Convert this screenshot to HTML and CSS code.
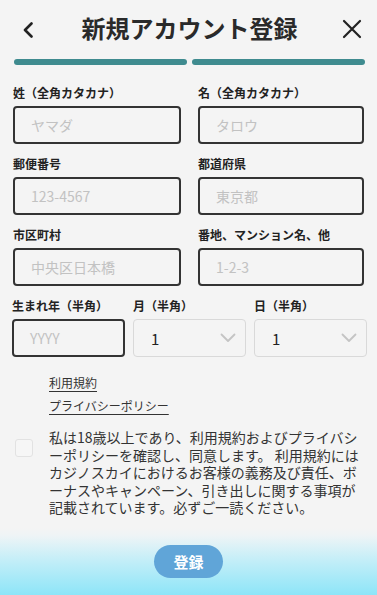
FILE: index.html
```html
<!DOCTYPE html>
<html lang="ja">
<head>
<meta charset="utf-8">
<link rel="stylesheet" href="styles.css">
</head>
<body>
<div class="page">
  <header class="header">
    <svg class="icon-back" width="12" height="16" viewBox="0 0 12 16"><path d="M9.5 1.5 L3 8 L9.5 14.5" fill="none" stroke="#222" stroke-width="2.6" stroke-linecap="round" stroke-linejoin="round"/></svg>
    <h1 class="title">新規アカウント登録</h1>
    <svg class="icon-close" width="20" height="20" viewBox="0 0 20 20"><path d="M2 2 L18 18 M18 2 L2 18" fill="none" stroke="#222" stroke-width="2.2" stroke-linecap="round"/></svg>
  </header>
  <div class="progress">
    <span class="bar"></span>
    <span class="bar"></span>
  </div>
  <form class="form">
    <div class="grid2">
      <div class="field">
        <label class="label">姓（全角カタカナ）</label>
        <div class="input"><span class="ph">ヤマダ</span></div>
      </div>
      <div class="field">
        <label class="label">名（全角カタカナ）</label>
        <div class="input"><span class="ph">タロウ</span></div>
      </div>
      <div class="field">
        <label class="label">郵便番号</label>
        <div class="input"><span class="ph">123-4567</span></div>
      </div>
      <div class="field">
        <label class="label">都道府県</label>
        <div class="input"><span class="ph">東京都</span></div>
      </div>
      <div class="field">
        <label class="label">市区町村</label>
        <div class="input"><span class="ph">中央区日本橋</span></div>
      </div>
      <div class="field">
        <label class="label">番地、マンション名、他</label>
        <div class="input"><span class="ph">1-2-3</span></div>
      </div>
    </div>
    <div class="grid3">
      <div class="field">
        <label class="label">生まれ年（半角）</label>
        <div class="input"><span class="ph">YYYY</span></div>
      </div>
      <div class="field">
        <label class="label">月（半角）</label>
        <div class="select"><span class="val">1</span>
          <svg width="16" height="10" viewBox="0 0 16 10"><path d="M1.5 1.5 L8 8 L14.5 1.5" fill="none" stroke="#c4c4c4" stroke-width="1.8" stroke-linecap="round" stroke-linejoin="round"/></svg>
        </div>
      </div>
      <div class="field">
        <label class="label">日（半角）</label>
        <div class="select"><span class="val">1</span>
          <svg width="16" height="10" viewBox="0 0 16 10"><path d="M1.5 1.5 L8 8 L14.5 1.5" fill="none" stroke="#c4c4c4" stroke-width="1.8" stroke-linecap="round" stroke-linejoin="round"/></svg>
        </div>
      </div>
    </div>
    <div class="links">
      <a class="link" href="#">利用規約</a>
      <a class="link" href="#">プライバシーポリシー</a>
    </div>
    <div class="agree">
      <span class="checkbox"></span>
      <p class="agree-text">私は18歳以上であり、利用規約およびプライバシーポリシーを確認し、同意します。 利用規約にはカジノスカイにおけるお客様の義務及び責任、ボーナスやキャンペーン、引き出しに関する事項が記載されています。必ずご一読ください。</p>
    </div>
  </form>
  <footer class="footer">
    <button class="submit" type="button">登録</button>
  </footer>
</div>
</body>
</html>
```
FILE: styles.css
```css
* { box-sizing: border-box; }
html, body { margin: 0; padding: 0; }
body {
  background: #f4f4f4;
  font-family: "Noto Sans CJK JP", "Noto Sans", sans-serif;
  color: #222;
  width: 377px;
  height: 595px;
  overflow: hidden;
}
.page { display: flex; flex-direction: column; height: 595px; }
.header {
  height: 59px;
  display: flex;
  align-items: center;
  justify-content: space-between;
  padding: 0 15px 3px 22px;
}
.icon-back { display: block; margin-top: 3px; }
.icon-close { display: block; margin-top: 1px; }
.title {
  margin: 0 0 0 3px;
  font-size: 24px;
  font-weight: 700;
  color: #2a2a2a;
  line-height: 30px;
  letter-spacing: 0;
}
.progress {
  display: flex;
  gap: 5px;
  padding: 0 12px 0 14px;
}
.bar {
  flex: 1;
  height: 6px;
  border-radius: 3px;
  background: #3f8b8f;
}
.form { padding: 20px 0 0; margin: 0; }
.grid2 {
  display: grid;
  grid-template-columns: 168px 166px;
  column-gap: 17px;
  row-gap: 12px;
  padding: 0 13px;
}
.grid3 {
  display: grid;
  grid-template-columns: 113px 113px 113px;
  column-gap: 8px;
  padding: 0 12px;
  margin-top: 12px;
}
.field { display: flex; flex-direction: column; gap: 5px; }
.label {
  font-size: 12px;
  font-weight: 700;
  line-height: 16px;
  color: #222;
  white-space: nowrap;
}
.input {
  height: 38px;
  border: 2px solid #333;
  border-radius: 4px;
  display: flex;
  align-items: center;
  padding: 0 16px;
}
.ph {
  font-size: 14px;
  color: #c2c2c2;
}
.select {
  height: 38px;
  border: 1.5px solid #d9d9d9;
  border-radius: 4px;
  display: flex;
  align-items: center;
  justify-content: space-between;
  padding: 0 9px 0 17px;
}
.val { font-size: 15px; color: #222; }
.links {
  display: flex;
  flex-direction: column;
  align-items: flex-start;
  gap: 3px;
  padding: 0 0 0 49px;
  margin-top: 16px;
}
.link {
  font-size: 12px;
  line-height: 20px;
  color: #333;
  text-decoration: underline;
  text-underline-offset: 3px;
}
.agree {
  display: flex;
  align-items: flex-start;
  gap: 16px;
  padding: 0 0 0 15px;
  margin-top: 13px;
}
.checkbox {
  flex: none;
  width: 18px;
  height: 18px;
  margin-top: 10px;
  border: 1.5px solid #e2e2e2;
  border-radius: 3px;
  background: #f6f6f6;
}
.agree-text {
  margin: 0;
  width: 314px;
  font-size: 14px;
  line-height: 17.5px;
  color: #333;
}
.footer {
  flex: 1;
  display: flex;
  justify-content: center;
  align-items: flex-start;
  padding-top: 28px;
  background: linear-gradient(to bottom, #f4f4f4 0%, #f4f4f4 14%, #eef4f6 24%, #c4eef8 55%, #8de5f8 100%);
}
.submit {
  width: 69px;
  height: 33px;
  border: none;
  border-radius: 17px;
  background: #60a5d8;
  color: #fff;
  font-family: inherit;
  font-size: 15px;
  font-weight: 700;
  padding: 0;
}
```
